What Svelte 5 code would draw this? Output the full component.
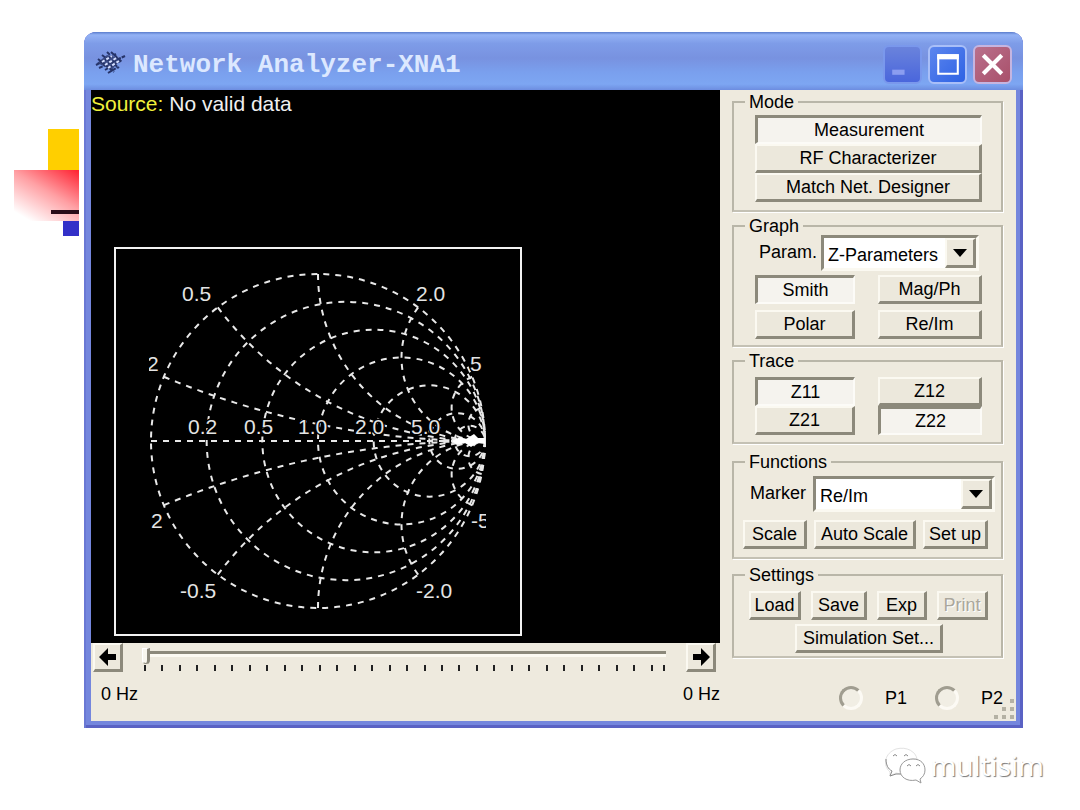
<script lang="ts">
  type Label = { text: string; x: number; y: number };

  const cx = 204;
  const cy = 194;
  const radius = 167;

  const resistances = [0, 0.2, 0.5, 1, 2, 5, 10];
  const reactances = [0.2, 0.5, 1, 2, 5, 10];

  const labels: Label[] = [
    { text: "0.5", x: 68, y: 54 },
    { text: "2.0", x: 302, y: 54 },
    { text: "2", x: 33, y: 124 },
    { text: "5", x: 356, y: 124 },
    { text: "0.2", x: 74, y: 187 },
    { text: "0.5", x: 130, y: 187 },
    { text: "1.0", x: 184, y: 187 },
    { text: "2.0", x: 241, y: 187 },
    { text: "5.0", x: 297, y: 187 },
    { text: "2", x: 37, y: 281 },
    { text: "-5", x: 357, y: 281 },
    { text: "-0.5", x: 66, y: 351 },
    { text: "-2.0", x: 302, y: 351 },
  ];

  // arc of constant reactance, from the rim to the open-circuit point
  function arc(x: number, side: 1 | -1) {
    const d = 1 + x * x;
    const px = cx + (radius * (x * x - 1)) / d;
    const py = cy - (side * radius * 2 * x) / d;
    const r = radius / x;
    return `M${px} ${py}A${r} ${r} 0 0 ${side === 1 ? 0 : 1} ${cx + radius} ${cy}`;
  }

  const ticks = Array.from({ length: 30 }, (_, i) => i);

  const modes = ["Measurement", "RF Characterizer", "Match Net. Designer"];
  const graphs = ["Smith", "Mag/Ph", "Polar", "Re/Im"];
  const traces = ["Z11", "Z12", "Z21", "Z22"];

  let mode = $state("Measurement");
  let graph = $state("Smith");
  let active = $state(["Z11", "Z22"]);
  let param = $state("Z-Parameters");
  let marker = $state("Re/Im");
  let freq = $state(0);
  let port = $state("");

  function toggle(t: string) {
    active = active.includes(t) ? active.filter((a) => a !== t) : [...active, t];
  }
</script>

<div class="slide">
  <div class="stage">
    <div class="decor" aria-hidden="true">
      <svg width="65" height="108" viewBox="0 0 65 108">
        <defs>
          <linearGradient id="fade" x1="1" y1="0" x2="0.25" y2="1">
            <stop offset="0" stop-color="#ff2030" />
            <stop offset="0.5" stop-color="#ffa0a4" />
            <stop offset="1" stop-color="#fff" />
          </linearGradient>
        </defs>
        <rect x="34" width="31" height="42" fill="#ffcf00" />
        <rect y="41" width="65" height="51" fill="url(#fade)" />
        <rect x="37" y="81" width="28" height="4" fill="#2a0c18" />
        <rect x="49" y="92" width="16" height="15" fill="#3330c8" />
      </svg>
    </div>

    <main class="window">
      <header class="titlebar">
        <svg class="chip" width="32" height="24" viewBox="0 0 32 24" aria-hidden="true">
          <path d="M2 12L12 4L26 7L17 19Z" fill="#3c4c86" />
          <path d="M12 1l3 3M7 4l17 13M16 1l11 10M3 8l16 13M1 14l20-11M4 17l26-12M10 19l17-10M13 22l10-6" stroke="#26346a" stroke-width="2" stroke-dasharray="4 1" />
          <path d="M7 11l10-6M10 14l13-8M13 17l11-7" stroke="#d4deff" stroke-width="2" stroke-dasharray="3 2" />
        </svg>
        <h1>Network Analyzer-XNA1</h1>
        <div class="controls">
          <button class="min" aria-label="Minimize">
            <svg viewBox="0 0 34 34"><rect x="7" y="22" width="12" height="5" fill="#8b9df0" /></svg>
          </button>
          <button class="max" aria-label="Maximize">
            <svg viewBox="0 0 34 34"><path d="M8 8h19v18H8z" fill="none" stroke="#fff" stroke-width="2" /><path d="M7 7h21v5H7z" fill="#fff" /></svg>
          </button>
          <button class="close" aria-label="Close">
            <svg viewBox="0 0 34 34"><path d="M8 8l18 18M26 8L8 26" stroke="#fff" stroke-width="4" /></svg>
          </button>
        </div>
      </header>

      <div class="body">
        <section class="left">
          <div class="screen">
            <p class="source"><span>Source:</span> No valid data</p>
            <svg class="smith" viewBox="0 0 408 389" role="img" aria-label="Smith chart">
              <clipPath id="area"><rect x="35" y="20" width="337" height="350" /></clipPath>
              <rect class="frame" x="1" y="1" width="406" height="387" />
              <g clip-path="url(#area)">
                <g class="grid">
                  {#each resistances as r}
                    <circle cx={cx + (radius * r) / (1 + r)} {cy} r={radius / (1 + r)} />
                  {/each}
                  {#each reactances as x}
                    <path d={arc(x, 1)} />
                    <path d={arc(x, -1)} />
                  {/each}
                  <path d="M{cx - radius} {cy}H{cx + radius}" />
                </g>
                <path class="node" d="M338 194l8-4 6 2 8-5 4 4h7v6l-8-1-6 4-6-4-8 2z" />
                {#each labels as l}
                  <text x={l.x} y={l.y}>{l.text}</text>
                {/each}
              </g>
            </svg>
          </div>

          <div class="sweep">
            <button class="btn step" aria-label="Previous">
              <svg width="20" height="18" viewBox="0 0 20 18"><path d="M1 9L10 0V6H18V12H10V18Z" /></svg>
            </button>
            <div class="slider">
              <input type="range" min="0" max="30" bind:value={freq} aria-label="Frequency" />
              <div class="ticks" aria-hidden="true">
                {#each ticks as t (t)}<i></i>{/each}
                <b></b>
              </div>
            </div>
            <button class="btn step" aria-label="Next">
              <svg width="20" height="18" viewBox="0 0 20 18"><path d="M19 9L10 0V6H2V12H10V18Z" /></svg>
            </button>
          </div>
          <div class="range"><span>0 Hz</span><span>0 Hz</span></div>
        </section>

        <aside class="panel">
          <fieldset class="mode">
            <legend>Mode</legend>
            {#each modes as m}
              <button class="btn" class:down={mode === m} onclick={() => (mode = m)}>{m}</button>
            {/each}
          </fieldset>

          <fieldset class="graph">
            <legend>Graph</legend>
            <div class="field">
              <label for="param">Param.</label>
              <div class="combo">
                <select id="param" bind:value={param}>
                  <option>Z-Parameters</option>
                  <option>Y-Parameters</option>
                  <option>S-Parameters</option>
                </select>
                <span class="arrow"><svg width="14" height="8" viewBox="0 0 14 8"><path d="M0 0H14L7 8Z" /></svg></span>
              </div>
            </div>
            <div class="pairs">
              {#each graphs as g}
                <button class="btn" class:down={graph === g} onclick={() => (graph = g)}>{g}</button>
              {/each}
            </div>
          </fieldset>

          <fieldset class="trace">
            <legend>Trace</legend>
            <div class="pairs">
              {#each traces as t}
                <button class="btn" class:down={active.includes(t)} onclick={() => toggle(t)}>{t}</button>
              {/each}
            </div>
          </fieldset>

          <fieldset class="functions">
            <legend>Functions</legend>
            <div class="field">
              <label for="marker">Marker</label>
              <div class="combo wide">
                <select id="marker" bind:value={marker}>
                  <option>Re/Im</option>
                  <option>Mag/Ph</option>
                </select>
                <span class="arrow"><svg width="14" height="8" viewBox="0 0 14 8"><path d="M0 0H14L7 8Z" /></svg></span>
              </div>
            </div>
            <div class="row">
              <button class="btn">Scale</button>
              <button class="btn">Auto Scale</button>
              <button class="btn">Set up</button>
            </div>
          </fieldset>

          <fieldset class="settings">
            <legend>Settings</legend>
            <div class="row">
              <button class="btn">Load</button>
              <button class="btn">Save</button>
              <button class="btn">Exp</button>
              <button class="btn" disabled>Print</button>
            </div>
            <button class="btn sim">Simulation Set...</button>
          </fieldset>

          <div class="ports">
            <label><input type="radio" value="P1" bind:group={port} />P1</label>
            <label><input type="radio" value="P2" bind:group={port} />P2</label>
          </div>
        </aside>

        <svg class="grip" width="22" height="22" viewBox="0 0 22 22" aria-hidden="true">
          <path d="M16 0h4v4h-4zM8 8h4v4H8zM16 8h4v4h-4zM0 16h4v4H0zM8 16h4v4H8zM16 16h4v4h-4z" />
        </svg>
      </div>
    </main>
  </div>

  <footer>
    <svg width="42" height="38" viewBox="0 0 42 38" aria-hidden="true">
      <g fill="#fff" stroke-width="1">
        <path d="M5 26C-3 19 0 7 11 3C22 0 31 6 32 13C20 12 13 20 16 28L11 27L5 30Z" stroke="#e2e2e2" />
        <path d="M1 13C1 19 3 23 7 25L5 30L11 28H16" stroke="#888" fill="none" />
        <path d="M28 13C36 13 40 18 40 24C40 28 38 31 35 33L36 37L31 34C22 36 15 31 15 24C15 18 20 13 28 13Z" stroke="#999" />
      </g>
      <path d="M8 10q2-3 4 0M19 10q2-3 4 0M22 20q2-3 4 0M31 20q2-3 4 0" fill="none" stroke="#888" />
    </svg>
    <span>multisim</span>
  </footer>
</div>

<style>
  :global(body) {
    margin: 0;
    background: #fff;
  }

  .slide {
    padding-top: 32px;
    font-family: "Liberation Sans", Arial, sans-serif;
    font-size: 18px;
    line-height: 20px;
    color: #000;
  }

  .stage {
    display: flex;
    padding-right: 57px;
  }

  .decor {
    flex: none;
    width: 70px;
    padding: 97px 0 0 14px;
  }

  .decor svg,
  .controls svg,
  .step svg,
  .arrow svg,
  .smith {
    display: block;
  }

  .window {
    flex: 1;
    min-width: 0;
    box-sizing: border-box;
    padding: 0 7px 7px;
    border-radius: 12px 12px 0 0;
    background: #7486dd;
    box-shadow: inset 2px 0 #6a78d4, inset -3px -3px #5a62c4;
  }

  .titlebar {
    display: flex;
    align-items: center;
    gap: 6px;
    height: 58px;
    margin: 0 -7px;
    padding: 4px 11px 0;
    box-sizing: border-box;
    border-radius: 12px 12px 0 0;
    background: linear-gradient(#5a7ccc, #93b2f5 5%, #7e9ce8 20%, #7892e0 45%, #7aa0ee 70%, #7da6f2 90%, #6d8de0);
  }

  h1 {
    flex: 1;
    margin: 0;
    padding-top: 4px;
    font: bold 26px/30px "Liberation Mono", "Courier New", monospace;
    color: #dce8ff;
    white-space: nowrap;
  }

  .controls {
    display: flex;
    gap: 6px;
    padding-top: 2px;
  }

  .controls button {
    width: 39px;
    height: 39px;
    padding: 0;
    border: 2px solid #a9bff8;
    border-radius: 6px;
    background: linear-gradient(135deg, #5c86ee, #2e62e4);
  }

  .controls .min {
    border-color: #7a98ec;
    background: linear-gradient(#6a83dc, #4a66dc);
  }

  .controls .close {
    border-color: #c5b5e0;
    background: linear-gradient(135deg, #b9708c, #a9506a);
  }

  .body {
    position: relative;
    display: flex;
    background: #eeeade;
  }

  .left {
    flex: 1;
    min-width: 0;
  }

  .screen {
    padding-bottom: 7px;
    background: #000;
  }

  .source {
    margin: 0;
    padding-bottom: 129px;
    font-size: 21px;
    line-height: 28px;
    color: #f0f0f0;
  }

  .source span {
    color: #f0f03c;
  }

  .smith {
    width: 408px;
    max-width: 100%;
    margin-left: 23px;
  }

  .frame {
    fill: none;
    stroke: #f2f2f2;
    stroke-width: 2;
  }

  .grid {
    fill: none;
    stroke: #e8e8e8;
    stroke-width: 2;
    stroke-dasharray: 6 6;
  }

  .node {
    fill: #fff;
  }

  .smith text {
    font-size: 21px;
    fill: #e4e4e4;
    stroke: #000;
    stroke-width: 3px;
    paint-order: stroke;
  }

  .sweep {
    display: flex;
    justify-content: space-between;
    padding: 0 4px 0 2px;
  }

  .btn {
    height: 29px;
    padding: 0;
    border: 2px solid;
    border-width: 2px 3px 3px 2px;
    border-color: #fbf9f1 #8c897b #8c897b #fbf9f1;
    background: #ece8dc;
    font: inherit;
    color: #000;
    white-space: nowrap;
  }

  .btn.down {
    border-width: 3px 2px 2px 3px;
    border-color: #8c897b #fcfbf7 #fcfbf7 #8c897b;
    background: #f5f3ee;
  }

  .btn:disabled {
    color: #aaa79c;
    text-shadow: 1px 1px #fff;
  }

  .step {
    flex: none;
    width: 30px;
  }

  .step svg {
    margin: auto;
  }

  .slider {
    flex: 1;
    margin: 3px 20px 0 19px;
  }

  input[type="range"] {
    display: block;
    width: 100%;
    height: 16px;
    margin: 0;
    appearance: none;
    background: none;
  }

  input[type="range"]::-webkit-slider-runnable-track {
    height: 4px;
    border-top: 3px solid #8c897b;
    border-bottom: 3px solid #fcfaf2;
  }

  input[type="range"]::-webkit-slider-thumb {
    appearance: none;
    width: 8px;
    height: 16px;
    margin-top: -6px;
    border: solid;
    border-width: 1px 3px 1px 1px;
    border-color: #fff #8c897b #8c897b #fff;
    border-radius: 0 0 4px 4px;
    background: #f8f6ee;
  }

  .ticks {
    display: flex;
    margin: 3px 1px 0 2px;
    height: 6px;
  }

  .ticks i {
    flex: 3;
    border-left: 2px solid #222;
  }

  .ticks i:last-of-type {
    flex: 2;
  }

  .ticks b {
    width: 2px;
    background: #222;
  }

  .range {
    display: flex;
    justify-content: space-between;
    padding: 12px 0 17px 10px;
  }

  .panel {
    flex: none;
    width: 296px;
    box-sizing: border-box;
    padding: 3px 13px 0 12px;
  }

  fieldset {
    min-width: 0;
    margin: 0 0 5px;
    padding: 0 19px 0 21px;
    border: 2px solid #b9b6a8;
    border-bottom-color: #c4c1b4;
    box-shadow: 1px 1px #fff;
  }

  legend {
    margin-left: -10px;
    padding: 0 4px;
    line-height: 18px;
  }

  .mode {
    display: flex;
    flex-direction: column;
    padding-top: 4px;
    padding-bottom: 8px;
  }

  .mode .btn {
    display: block;
    width: 100%;
  }

  .field {
    display: flex;
    justify-content: flex-end;
    gap: 4px;
    line-height: 34px;
  }

  .combo {
    position: relative;
    flex: none;
    width: 158px;
    height: 36px;
    box-sizing: border-box;
    border: 3px solid;
    border-color: #8c897b #fbf9f1 #fbf9f1 #8c897b;
    background: #fff;
  }

  .combo.wide {
    width: 182px;
  }

  select {
    width: 100%;
    height: 30px;
    padding: 0 30px 0 4px;
    border: 0;
    appearance: none;
    background: none;
    font: inherit;
    color: #000;
  }

  .arrow {
    position: absolute;
    top: 0;
    right: 0;
    bottom: 0;
    display: grid;
    place-items: center;
    width: 26px;
    border: solid;
    border-width: 2px 3px 3px 2px;
    border-color: #fbf9f1 #8c897b #8c897b #fbf9f1;
    background: #ece8dc;
    pointer-events: none;
  }

  .pairs {
    display: grid;
    grid-template-columns: 100fr 104fr;
    column-gap: 23px;
  }

  .graph {
    padding-bottom: 6px;
  }

  .graph .field {
    padding-right: 3px;
  }

  .graph .pairs {
    row-gap: 6px;
    margin-top: 4px;
  }

  .trace {
    padding-top: 7px;
    padding-bottom: 7px;
    margin-bottom: 9px;
  }

  .functions,
  .settings {
    padding-left: 9px;
    padding-right: 6px;
    margin-bottom: 7px;
  }

  .functions legend,
  .settings legend {
    margin-left: 2px;
  }

  .functions {
    padding-top: 5px;
    padding-bottom: 8px;
  }

  .functions .field {
    gap: 7px;
  }

  .row {
    display: grid;
  }

  .functions .row {
    grid-template-columns: 64fr 102fr 65fr;
    gap: 7px;
    padding-right: 7px;
    margin-top: 8px;
  }

  .settings {
    padding-top: 7px;
    padding-bottom: 3px;
    margin-bottom: 0;
  }

  .settings .row {
    grid-template-columns: 52fr 56fr 50fr 51fr;
    gap: 10px;
    padding: 0 7px 0 6px;
  }

  .sim {
    display: block;
    width: 148px;
    margin: 4px auto 0;
  }

  .ports {
    display: flex;
    justify-content: flex-end;
    gap: 28px;
    padding-top: 28px;
  }

  .ports label {
    display: flex;
    align-items: center;
    gap: 22px;
  }

  input[type="radio"] {
    width: 24px;
    height: 24px;
    margin: 0;
    appearance: none;
    border: 3px solid;
    border-color: #a09d90 #fcfaf4 #fcfaf4 #a09d90;
    border-radius: 50%;
    background: #f1eee4;
  }

  input[type="radio"]:checked {
    background: radial-gradient(#000 30%, #fff 35%);
  }

  .grip {
    position: absolute;
    right: 0;
    bottom: 0;
    fill: #b4b1a4;
  }

  footer {
    display: flex;
    align-items: center;
    justify-content: flex-end;
    gap: 3px;
    padding: 17px 36px 0 0;
    font: 28px/40px "Open Sans", "Noto Sans", sans-serif;
    color: #fff;
    text-shadow: 1px 1px 1px #777;
  }
</style>
